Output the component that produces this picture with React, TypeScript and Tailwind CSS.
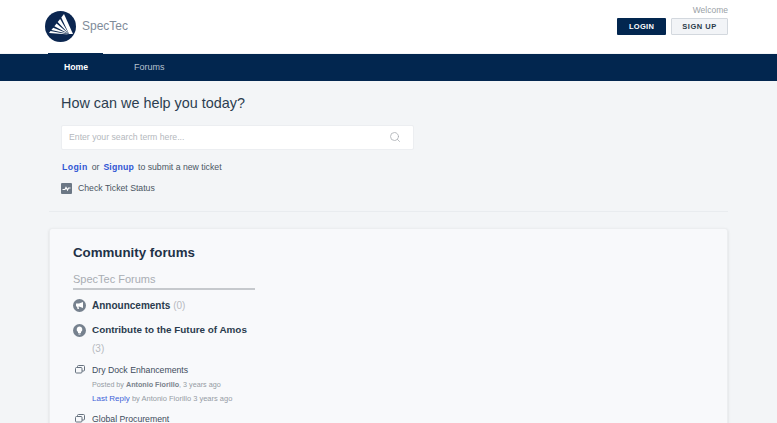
import { Search } from 'lucide-react';

const font = "font-['Liberation_Sans',Arial,sans-serif]";

// ─── Icons ────────────────────────────────────────────────────────────────────

function Logo() {
  return (
    <svg width="31" height="31" viewBox="0 0 31 31">
      <circle cx="15.5" cy="15.5" r="15.5" fill="#0b2650" />
      <path d="M19 3 L28 23 L24 23 L16.3 6.4 Z" fill="#fff" />
      <path d="M15.1 7.9 L12.7 11 L24 23 Z" fill="#fff" />
      <path d="M11.5 12.5 L9.4 15.2 L24 23 Z" fill="#fff" />
      <path d="M8.2 16.7 L6.4 19 L24 23 Z" fill="#fff" />
      <path d="M5.5 20.1 L4 22 L24 23.5 Z" fill="#fff" />
    </svg>
  );
}

function TicketStatusIcon() {
  return (
    <span className="flex h-[11px] w-[11px] items-center justify-center rounded-[1px] bg-[#6b7785]">
      <svg width="9" height="9" viewBox="0 0 9 9" fill="none" stroke="#fff" strokeWidth="1.2">
        <path d="M0.5 5.5 H3 L4 3.5 L5.5 6 L6.5 4 H8.5" />
      </svg>
    </span>
  );
}

function MegaphoneBadge() {
  return (
    <span className="flex h-[13px] w-[13px] shrink-0 items-center justify-center rounded-full bg-[#76818e]">
      <svg width="9" height="9" viewBox="0 0 9 9" fill="#fff">
        <path d="M1 2.5 H4 L8 1 V7 L4 5.5 H3.5 L4 8 H2.5 L2 5.5 H1 Z" />
      </svg>
    </span>
  );
}

function BulbBadge() {
  return (
    <span className="flex h-[13px] w-[13px] shrink-0 items-center justify-center rounded-full bg-[#76818e]">
      <svg width="9" height="9" viewBox="0 0 9 9" fill="#fff">
        <path d="M4.5 0.5 A3 3 0 0 1 6 6 V7 H3 V6 A3 3 0 0 1 4.5 0.5 Z" />
        <rect x="3.5" y="7.5" width="2" height="1" />
      </svg>
    </span>
  );
}

function TopicIcon() {
  return (
    <svg width="10" height="9" viewBox="0 0 10 9" fill="none" stroke="#66727f" strokeWidth="1" className="shrink-0">
      <rect x="0.5" y="2.5" width="6.5" height="5.5" rx="1" />
      <path d="M2.5 2.5 V1.5 A1 1 0 0 1 3.5 0.5 H8.5 A1 1 0 0 1 9.5 1.5 V5 A1 1 0 0 1 8.5 6 H7" />
    </svg>
  );
}

// ─── Header ───────────────────────────────────────────────────────────────────

function Header() {
  return (
    <header className="flex h-[53px] items-start justify-between bg-white pl-[45px] pr-[49px]">
      <div className="mt-[11px] flex items-center gap-[6px]">
        <Logo />
        <span className="mb-[2px] text-[12px] text-[#7f8c9a]">SpecTec</span>
      </div>
      <div className="flex flex-col items-end">
        <span className="mt-[4px] text-[8.5px] leading-[12px] text-[#9a9fa6]">Welcome</span>
        <div className="mt-[2px] flex gap-[5px]">
          <button className="h-[17px] w-[49px] rounded-[1px] bg-[#02264f] text-[7.5px] font-bold tracking-[0.3px] text-white">
            LOGIN
          </button>
          <button className="h-[17px] w-[57px] rounded-[1px] border border-[#d3d8de] bg-[#f2f4f7] text-[7.5px] font-bold tracking-[0.5px] text-[#2b3a4a]">
            SIGN UP
          </button>
        </div>
      </div>
    </header>
  );
}

function Nav() {
  return (
    <nav className="mt-px flex h-[27px] items-center bg-[#02264f] text-[9px]">
      <div className="relative ml-[48px] flex h-full w-[55px] items-center justify-center pl-px text-[8.7px] font-bold text-white">
        <span className="absolute -top-px left-0 h-px w-full bg-[#02264f]" />
        Home
      </div>
      <span className="ml-[31px] text-[#b7c2cf]">Forums</span>
    </nav>
  );
}

// ─── Page ─────────────────────────────────────────────────────────────────────

export default function App() {
  return (
    <div className={`${font} h-[423px] overflow-hidden bg-[#f3f5f7]`}>
      <Header />
      <Nav />

      <main className="px-[49px]">
        <section className="border-b border-[#e9ecef] pb-[17px] pl-[12px] pt-[13px]">
          <h1 className="text-[14.4px] leading-[19px] text-[#2c3e50]">How can we help you today?</h1>
          <div className="mt-[12px] flex h-[25px] w-[353px] items-center justify-between rounded-[2px] border border-[#eceef1] bg-white pl-[7px] pr-[12px]">
            <span className="text-[8.7px] text-[#b4b8bd]">Enter your search term here...</span>
            <Search size={12} color="#a9adb2" strokeWidth={1.6} className="mb-[2px]" />
          </div>
          <p className="mt-[12px] flex h-[12px] items-center text-[8.7px] text-[#4a5663]">
            <span className="ml-px font-bold tracking-[0.4px] text-[#2f55d4]">Login</span>
            <span className="ml-[4px]">or</span>
            <span className="ml-[4px] font-bold tracking-[0.2px] text-[#2f55d4]">Signup</span>
            <span className="ml-[4px]">to submit a new ticket</span>
          </p>
          <div className="mt-[8px] flex items-center gap-[6px] text-[8.7px] leading-[12px] text-[#4a5663]">
            <TicketStatusIcon />
            Check Ticket Status
          </div>
        </section>

        <section className="mt-[16px] h-[300px] rounded-[3px] border border-[#eceef0] bg-[#f8f9fb] px-[23px] pt-[15px] shadow-sm">
          <h2 className="text-[13.3px] font-bold leading-[17px] text-[#1f3247]">Community forums</h2>
          <div className="w-[182px]">
            <div className="mt-[11px] border-b-2 border-[#c6c9cd] pb-[2px] text-[11px] leading-[14px] text-[#a9adb3]">
              SpecTec Forums
            </div>
            <div className="mt-[8px] flex items-center gap-[6px] text-[10px] font-bold text-[#2a3b4d]">
              <MegaphoneBadge />
              <span>
                Announcements <span className="font-normal text-[#b7babf]">(0)</span>
              </span>
            </div>
            <div className="mt-[10px] flex items-center gap-[6px] text-[9.9px] font-bold text-[#2a3b4d]">
              <BulbBadge />
              Contribute to the Future of Amos
            </div>
            <div className="ml-[19px] mt-[4px] text-[10px] leading-[13px] text-[#b7babf]">(3)</div>

            <div className="mt-[9px] flex items-center gap-[7px] text-[8.7px] leading-[12px] text-[#3e4c5b]">
              <span className="ml-[2px]">
                <TopicIcon />
              </span>
              Dry Dock Enhancements
            </div>
            <div className="ml-[19px] mt-[3px] text-[7.2px] leading-[11px] text-[#969ca4]">
              Posted by <span className="font-bold text-[#7a828c]">Antonio Fiorillo</span>, 3 years ago
            </div>
            <div className="ml-[19px] mt-[3px] text-[7.5px] leading-[11px] text-[#969ca4]">
              <span className="text-[8px] text-[#3f63d8]">Last Reply</span> by Antonio Fiorillo 3 years ago
            </div>
            <div className="mt-[9px] flex items-center gap-[7px] text-[8.7px] leading-[12px] text-[#3e4c5b]">
              <span className="ml-[2px]">
                <TopicIcon />
              </span>
              Global Procurement
            </div>
          </div>
        </section>
      </main>
    </div>
  );
}
